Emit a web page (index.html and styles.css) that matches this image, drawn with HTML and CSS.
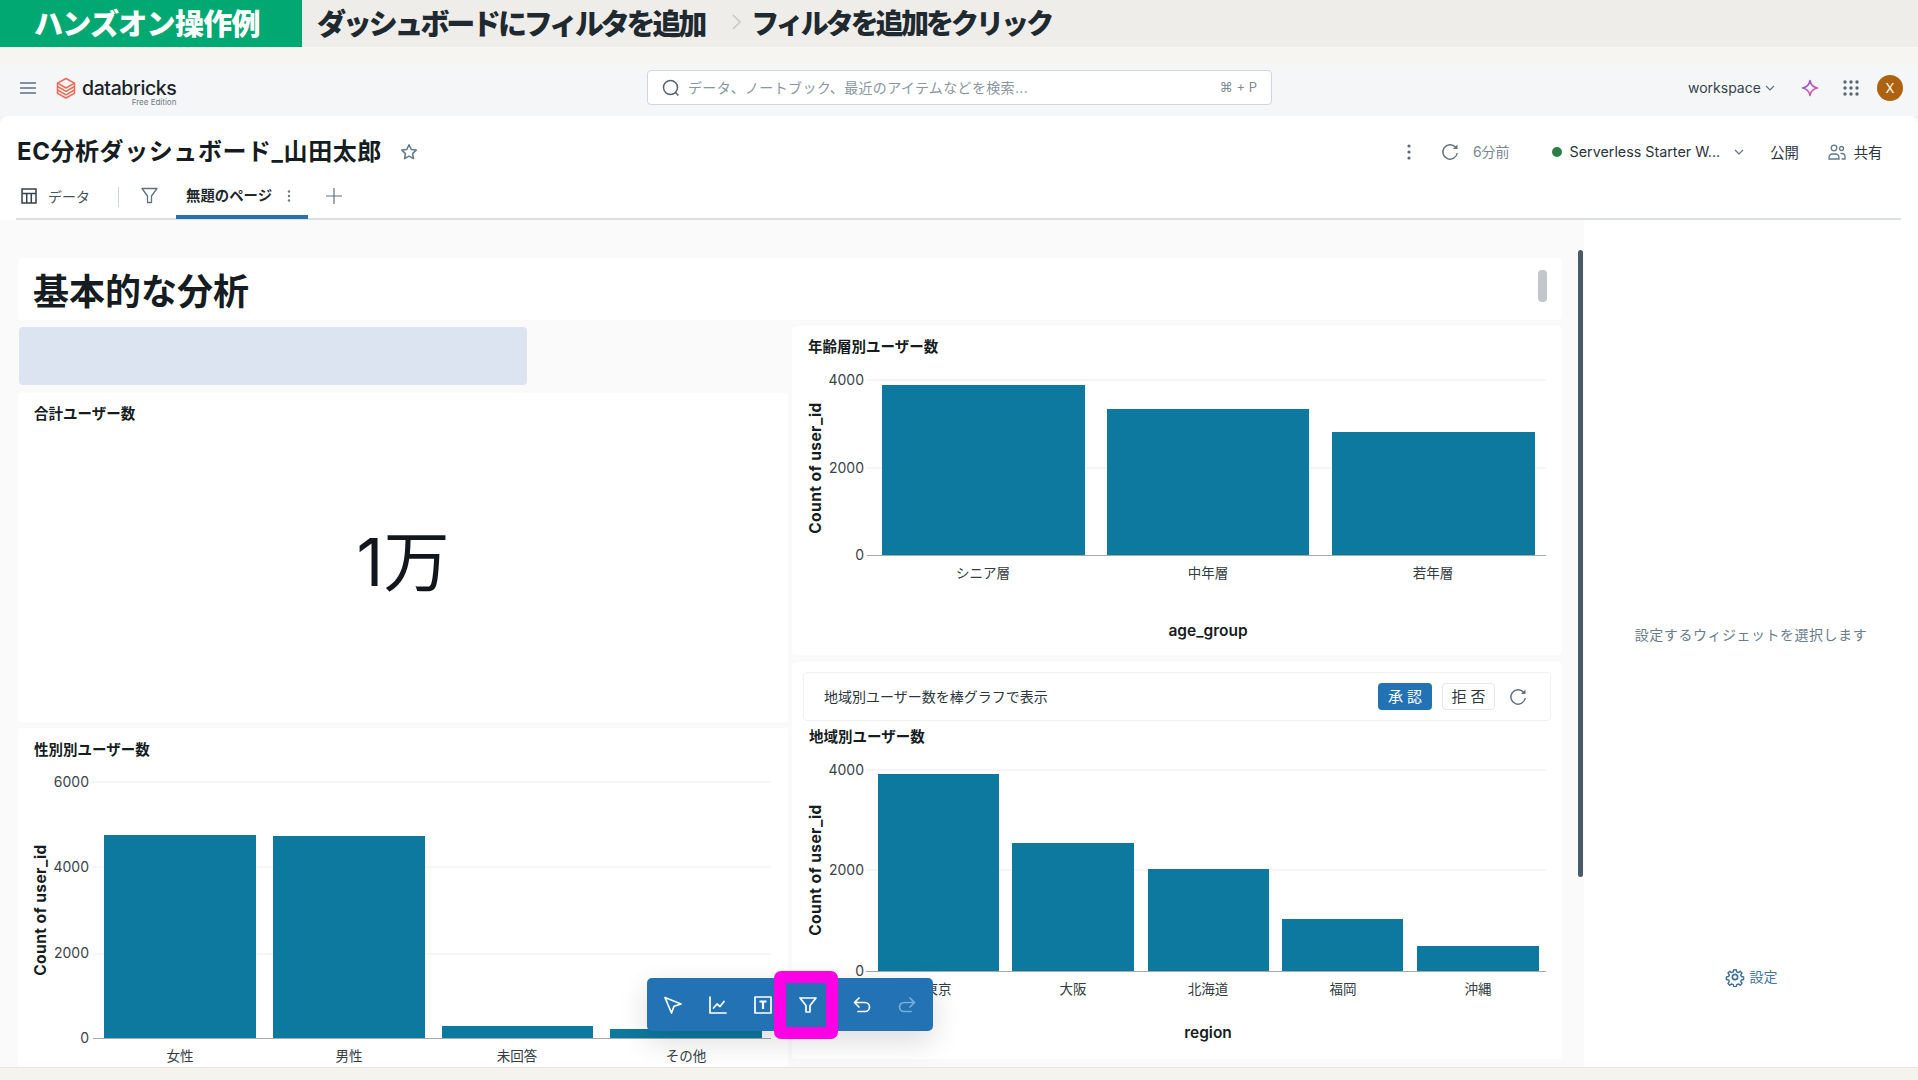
FILE: index.html
```html
<!DOCTYPE html>
<html lang="ja">
<head>
<meta charset="utf-8">
<title>EC分析ダッシュボード</title>
<link rel="stylesheet" href="styles.css">
</head>
<body>
<div class="page">
  <header class="banner">
    <div class="banner-tag">ハンズオン操作例</div>
    <div class="banner-step">ダッシュボードにフィルタを追加</div>
    <svg class="banner-sep" width="12" height="20" viewBox="0 0 12 20"><path d="M2 3l7 7-7 7" fill="none" stroke="#c9c9c4" stroke-width="1.6"/></svg>
    <div class="banner-action">フィルタを追加をクリック</div>
  </header>

  <nav class="topnav">
    <div class="nav-left">
      <svg class="hamburger" width="16" height="12" viewBox="0 0 16 12"><path d="M0 1h16M0 6h16M0 11h16" stroke="#5f7281" stroke-width="1.5"/></svg>
      <svg class="logo-mark" width="20" height="22" viewBox="0 0 20 22"><g fill="none" stroke="#ea6a55" stroke-width="1.5" stroke-linejoin="round"><path d="M10 1.5l8.5 4.7L10 11 1.500 6.200z"/><path d="M1.500 9.500L10 14.300l8.500-4.800"/><path d="M1.500 13L10 17.800 18.500 13"/><path d="M1.500 6.200v10.200L10 21l8.500-4.600V6.200"/></g></svg>
      <div class="logo-text">
        <span class="logo-name">databricks</span>
        <span class="logo-edition">Free Edition</span>
      </div>
    </div>
    <div class="search">
      <svg width="18" height="18" viewBox="0 0 18 18"><circle cx="8.500" cy="8.500" r="7" fill="none" stroke="#56636e" stroke-width="1.500"/><path d="M13 13l3.500 3.500" stroke="#56636e" stroke-width="1.500"/></svg>
      <span class="search-text">データ、ノートブック、最近のアイテムなどを検索...</span>
      <span class="search-key">⌘ + P</span>
    </div>
    <div class="nav-right">
      <span class="workspace">workspace</span>
      <svg class="chev-ws" width="10" height="6" viewBox="0 0 10 6"><path d="M1 1l4 4 4-4" fill="none" stroke="#5f7281" stroke-width="1.2"/></svg>
      <svg class="sparkle" width="18" height="18" viewBox="0 0 18 18"><defs><linearGradient id="spk" x1="0" y1="0" x2="1" y2="1"><stop offset="0" stop-color="#7b63e0"/><stop offset="1" stop-color="#f0528a"/></linearGradient></defs><path d="M9 1.500C9.800 6 12 8.200 16.500 9 12 9.800 9.800 12 9 16.500 8.200 12 6 9.800 1.500 9 6 8.200 8.200 6 9 1.500z" fill="none" stroke="url(#spk)" stroke-width="1.600" stroke-linejoin="round"/></svg>
      <svg class="apps" width="16" height="16" viewBox="0 0 16 16"><g fill="#5a6873"><circle cx="2" cy="2" r="1.700"/><circle cx="8" cy="2" r="1.700"/><circle cx="14" cy="2" r="1.700"/><circle cx="2" cy="8" r="1.700"/><circle cx="8" cy="8" r="1.700"/><circle cx="14" cy="8" r="1.700"/><circle cx="2" cy="14" r="1.700"/><circle cx="8" cy="14" r="1.700"/><circle cx="14" cy="14" r="1.700"/></g></svg>
      <span class="avatar">X</span>
    </div>
  </nav>

  <main class="main">
    <div class="title-row">
      <h1 class="dash-title">EC分析ダッシュボード_山田太郎</h1>
      <svg class="star" width="18" height="18" viewBox="0 0 18 18"><path d="M9 1.800l2.200 4.600 5 .7-3.600 3.500.9 5L9 13.200l-4.500 2.400.9-5L1.800 7.100l5-.7z" fill="none" stroke="#5f7a8d" stroke-width="1.500" stroke-linejoin="round"/></svg>
      <div class="title-actions">
        <svg class="act-kebab" width="4" height="16" viewBox="0 0 4 16"><g fill="#5a6873"><circle cx="2" cy="2" r="1.600"/><circle cx="2" cy="8" r="1.600"/><circle cx="2" cy="14" r="1.600"/></g></svg>
        <svg class="act-refresh" width="18" height="18" viewBox="0 0 18 18"><path d="M14.500 4.200A7.200 7.200 0 1 0 16.200 10" fill="none" stroke="#5f6f7b" stroke-width="1.400"/><path d="M16.500 1.500v4.500H12z" fill="#5f6f7b"/></svg>
        <span class="act-ago">6分前</span>
        <span class="act-dot"></span>
        <span class="act-wh">Serverless Starter W...</span>
        <svg class="act-chev" width="10" height="6" viewBox="0 0 10 6"><path d="M1 1l4 4 4-4" fill="none" stroke="#5f7281" stroke-width="1.200"/></svg>
        <span class="act-pub">公開</span>
        <svg class="act-share" width="18" height="16" viewBox="0 0 18 16"><g fill="none" stroke="#5f7a8d" stroke-width="1.300"><circle cx="6" cy="4" r="2.800"/><circle cx="13.500" cy="4.500" r="2"/><path d="M1 15v-1.500A3.500 3.500 0 0 1 4.500 10h3a3.500 3.500 0 0 1 3.500 3.500V15z"/><path d="M12.500 9.500h1.500a3 3 0 0 1 3 3V15h-3.500"/></g></svg>
        <span class="act-shr">共有</span>
      </div>
    </div>

    <div class="tabs">
      <svg class="tab-table" width="16" height="16" viewBox="0 0 16 16"><g fill="none" stroke="#36424b" stroke-width="1.500"><rect x="1" y="1" width="14" height="14"/><path d="M1 5.500h14M5.700 5.500V15M10.300 5.500V15"/></g></svg>
      <span class="tab-data">データ</span>
      <span class="tab-sep"></span>
      <svg class="tab-filter" width="17" height="17" viewBox="0 0 17 17"><path d="M1 1.500h15L10.500 9v6.500h-4V9z" fill="none" stroke="#5f7281" stroke-width="1.300" stroke-linejoin="round"/></svg>
      <div class="tab-active">
        <span class="tab-name">無題のページ</span>
        <svg width="4" height="12" viewBox="0 0 4 12"><g fill="#6a7a86"><circle cx="2" cy="1.500" r="1.200"/><circle cx="2" cy="6" r="1.200"/><circle cx="2" cy="10.500" r="1.200"/></g></svg>
      </div>
      <svg class="tab-plus" width="16" height="16" viewBox="0 0 16 16"><path d="M8 0v16M0 8h16" stroke="#5f7281" stroke-width="1.200"/></svg>
    </div>

    <div class="work">
      <section class="canvas">
        <div class="heading-card">
          <h2 class="heading">基本的な分析</h2>
          <span class="heading-thumb"></span>
        </div>
        <div class="grid">
          <div class="col col-left">
            <div class="filter-slot"></div>
            <article class="card card-counter">
              <h3 class="card-title">合計ユーザー数</h3>
              <div class="counter">1万</div>
            </article>
            <article class="card card-gender">
              <h3 class="card-title card-title-g">性別別ユーザー数</h3>
              <svg class="chart" width="770" height="308" viewBox="18 759 770 308">
                <path class="grid-line" d="M93 782H771M93 867H771M93 954H771"/>
                <text class="tick" x="89" y="782">6000</text>
                <text class="tick" x="89" y="867">4000</text>
                <text class="tick" x="89" y="953">2000</text>
                <text class="tick" x="89" y="1038">0</text>
                <g class="bars">
                  <rect x="104" y="835" width="152" height="203"/>
                  <rect x="273" y="836" width="152" height="202"/>
                  <rect x="442" y="1026" width="151" height="12"/>
                  <rect x="610" y="1029" width="152" height="9"/>
                </g>
                <path class="axis-line" d="M93 1038.500H771"/>
                <text class="cat" x="180" y="1056">女性</text>
                <text class="cat" x="349" y="1056">男性</text>
                <text class="cat" x="517" y="1056">未回答</text>
                <text class="cat" x="686" y="1056">その他</text>
                <text class="axis-y" transform="translate(40 910) rotate(-90)">Count of user_id</text>
              </svg>
            </article>
          </div>
          <div class="col col-right">
            <article class="card card-age">
              <h3 class="card-title">年齢層別ユーザー数</h3>
              <svg class="chart" width="770" height="299" viewBox="792 356 770 299">
                <path class="grid-line" d="M867 380H1546M867 468H1546"/>
                <text class="tick" x="864" y="380">4000</text>
                <text class="tick" x="864" y="468">2000</text>
                <text class="tick" x="864" y="555">0</text>
                <g class="bars">
                  <rect x="882" y="385" width="203" height="170"/>
                  <rect x="1107" y="409" width="202" height="146"/>
                  <rect x="1332" y="432" width="203" height="123"/>
                </g>
                <path class="axis-line" d="M867 555.500H1546"/>
                <text class="cat" x="983" y="573">シニア層</text>
                <text class="cat" x="1208" y="573">中年層</text>
                <text class="cat" x="1433" y="573">若年層</text>
                <text class="axis-x" x="1208" y="630">age_group</text>
                <text class="axis-y" transform="translate(815 468) rotate(-90)">Count of user_id</text>
              </svg>
            </article>
            <article class="card card-region">
              <div class="ai-bar">
                <span class="ai-text">地域別ユーザー数を棒グラフで表示</span>
                <span class="btn btn-primary">承 認</span>
                <span class="btn btn-plain">拒 否</span>
                <svg class="ai-refresh" width="18" height="18" viewBox="0 0 18 18"><path d="M14.500 4.200A7.200 7.200 0 1 0 16.200 10" fill="none" stroke="#5f6f7b" stroke-width="1.400"/><path d="M16.500 1.500v4.500H12z" fill="#5f6f7b"/></svg>
              </div>
              <h3 class="card-title card-title-r">地域別ユーザー数</h3>
              <svg class="chart" width="770" height="312" viewBox="792 747 770 312">
                <path class="grid-line" d="M866 770H1546M866 870H1546"/>
                <text class="tick" x="864" y="770">4000</text>
                <text class="tick" x="864" y="870">2000</text>
                <text class="tick" x="864" y="971">0</text>
                <g class="bars">
                  <rect x="878" y="774" width="121" height="197"/>
                  <rect x="1012" y="843" width="122" height="128"/>
                  <rect x="1148" y="869" width="121" height="102"/>
                  <rect x="1282" y="919" width="121" height="52"/>
                  <rect x="1417" y="946" width="122" height="25"/>
                </g>
                <path class="axis-line" d="M866 971.500H1546"/>
                <text class="cat" x="938" y="989">東京</text>
                <text class="cat" x="1073" y="989">大阪</text>
                <text class="cat" x="1208" y="989">北海道</text>
                <text class="cat" x="1343" y="989">福岡</text>
                <text class="cat" x="1478" y="989">沖縄</text>
                <text class="axis-x" x="1208" y="1032">region</text>
                <text class="axis-y" transform="translate(815 870) rotate(-90)">Count of user_id</text>
              </svg>
            </article>
          </div>
        </div>
        <span class="canvas-scroll"></span>
      </section>

      <aside class="panel">
        <p class="panel-hint">設定するウィジェットを選択します</p>
        <div class="panel-settings">
          <svg width="20" height="20" viewBox="0 0 24 24"><g fill="none" stroke="#3f7199" stroke-width="2" stroke-linejoin="round"><circle cx="12" cy="12" r="3.200"/><path d="M10.300 2h3.400l.6 3 2.200.9 2.600-1.700 2.400 2.400-1.700 2.600.9 2.200 3 .6v3.400l-3 .6-.9 2.200 1.700 2.600-2.400 2.400-2.600-1.700-2.200.9-.6 3h-3.400l-.6-3-2.200-.9-2.600 1.700-2.400-2.400 1.700-2.600-.9-2.200-3-.6v-3.400l3-.6.9-2.200-1.700-2.600 2.400-2.400 2.600 1.700 2.200-.9z" transform="translate(12 12) scale(.88) translate(-12 -12)"/></g></svg>
          <span>設定</span>
        </div>
      </aside>
    </div>
  </main>

  <div class="foot"></div>

  <div class="toolbar">
    <svg class="tool" viewBox="0 0 20 20"><path d="M2 2.500l16 6.500-7 2.300L8.500 18z" class="tool-stroke"/></svg>
    <svg class="tool" viewBox="0 0 20 20"><path d="M2 2v16h16" class="tool-stroke"/><path d="M5.500 13l3.500-4 3 2.500 4-5" class="tool-stroke"/></svg>
    <svg class="tool" viewBox="0 0 20 20"><rect x="2" y="2" width="16" height="16" class="tool-stroke"/><path d="M6.500 6.500h7M10 6.500v7.500" class="tool-stroke tool-bold"/></svg>
    <span class="tool-hi"><svg class="tool" viewBox="0 0 20 20"><path d="M2 3h16l-6 7.500V17H8v-6.500z" class="tool-stroke"/></svg></span>
    <svg class="tool tool-undo" viewBox="0 0 20 20"><path d="M7 3L2.500 7.500 7 12M2.500 7.500H13a4.500 4.500 0 0 1 0 9H6" class="tool-stroke"/></svg>
    <svg class="tool" viewBox="0 0 20 20"><path d="M13 3l4.500 4.500L13 12M17.500 7.500H7a4.500 4.500 0 0 0 0 9h7" class="tool-stroke tool-dim"/></svg>
  </div>
</div>
</body>
</html>
```
FILE: styles.css
```css
* { box-sizing: border-box; }
html, body { margin: 0; height: 100%; }
body {
  font-family: Inter, "Noto Sans CJK JP", "Noto Sans", sans-serif;
  color: #1f272d;
  background: #f4f3ee;
  overflow: hidden;
}
h1, h2, h3, p { margin: 0; }

.page {
  position: relative;
  width: 1918px;
  height: 1080px;
  display: flex;
  flex-direction: column;
  overflow: hidden;
}

/* Banner */
.banner {
  height: 47px;
  flex: none;
  display: flex;
  align-items: center;
  padding-bottom: 4px;
  background: #efede9;
  font-family: "Noto Sans CJK JP", sans-serif;
  font-weight: 900;
  color: #1f2a30;
}
.banner-tag {
  width: 302px;
  height: 47px;
  margin-bottom: -4px;
  padding: 0 0 4px 34px;
  display: flex;
  align-items: center;
  background: #02a871;
  color: #fff;
  font-size: 29px;
  letter-spacing: -.7px;
}
.banner-step {
  margin-left: 15px;
  font-size: 29px;
  letter-spacing: -3.150px;
}
.banner-sep { margin-left: 27px; }
.banner-action {
  margin-left: 8px;
  font-size: 28px;
  letter-spacing: -2.950px;
}

/* Top nav */
.topnav {
  height: 69px;
  flex: none;
  padding: 23px 0 10px;
  display: flex;
  align-items: flex-start;
  background: linear-gradient(#f7f5f2 0 14px, #f4f6f8 24px);
}
.nav-left {
  width: 647px;
  height: 36px;
  display: flex;
  align-items: center;
  padding-left: 20px;
}
.logo-mark { margin-left: 20px; }
.logo-text {
  margin: 9px 0 0 6px;
  display: flex;
  flex-direction: column;
  align-items: flex-end;
  line-height: 1;
}
.logo-name {
  font-size: 19.500px;
  font-weight: 500;
  letter-spacing: -.4px;
  color: #1b2328;
}
.logo-edition {
  font-size: 8px;
  color: #6f7b84;
  margin-top: 0;
}
.search {
  width: 625px;
  height: 35px;
  display: flex;
  align-items: center;
  padding: 0 14px 0 14px;
  background: #fff;
  border: 1px solid #ced6dd;
  border-radius: 4px;
}
.search-text {
  margin: 0 0 2px 8px;
  font-size: 14px;
  letter-spacing: .35px;
  color: #8a969f;
}
.search-key {
  margin: 0 0 2px auto;
  font-size: 13px;
  color: #7f8b95;
}
.nav-right {
  flex: 1;
  height: 36px;
  display: flex;
  align-items: center;
  padding-left: 416px;
}
.workspace { font-size: 14px; color: #37434c; padding-bottom: 2px; }
.chev-ws { margin-left: 4px; }
.sparkle { margin-left: 26px; }
.apps { margin-left: 24px; }
.avatar {
  width: 26px;
  height: 26px;
  margin-left: 18px;
  border-radius: 50%;
  background: #ad620f;
  color: #fff;
  font-size: 13px;
  display: flex;
  align-items: center;
  justify-content: center;
}

/* Main */
.main {
  height: 951px;
  flex: none;
  display: flex;
  flex-direction: column;
  background: #fff;
  border-radius: 8px 8px 0 0;
}
.title-row {
  height: 52px;
  flex: none;
  padding: 20px 0 0 17px;
  display: flex;
  align-items: flex-start;
}
.dash-title {
  font-size: 24px;
  line-height: 32px;
  font-weight: 700;
  letter-spacing: .57px;
  color: #161d22;
}
.star { margin: 7px 0 0 18px; }
.title-actions {
  flex: 1;
  height: 32px;
  display: flex;
  align-items: center;
  font-size: 14.300px;
  padding-left: 989px;
  color: #2a343b;
}
.title-actions span { margin-bottom: 2px; }
.act-refresh { margin-left: 30px; }
.title-actions .act-ago { margin-left: 14px; color: #7a8791; font-size: 14px; }
.title-actions .act-dot {
  width: 10px;
  height: 10px;
  margin: 0 0 0 42px;
  border-radius: 50%;
  background: #2b8043;
}
.act-wh { margin-left: 8px; white-space: nowrap; }
.act-chev { margin-left: 14px; }
.act-pub { margin-left: 26px; }
.act-share { margin-left: 29px; }
.act-shr { margin-left: 8px; }

.tabs {
  height: 52px;
  flex: none;
  margin: 0 17px 0 16px;
  padding: 7px 0 0 5px;
  display: flex;
  align-items: center;
  border-bottom: 2px solid #d8e0e5;
  font-size: 14px;
}
.tab-table { margin-top: -2px; }
.tab-data { margin: 0 0 2px 11px; color: #48545d; }
.tab-sep {
  width: 1px;
  height: 20px;
  margin-left: 28px;
  background: #cdd5da;
}
.tab-filter { margin: -2px 0 0 22px; }
.tab-active {
  width: 132px;
  height: 43px;
  margin: 0 0 -2px 18px;
  padding-left: 10px;
  display: flex;
  align-items: center;
  gap: 15px;
  border-bottom: 4px solid #2272b4;
  font-weight: 500;
}
.tab-name { font-size: 14.400px; color: #1f272d; font-weight: 700; margin-bottom: 2px; }
.tab-plus { margin: -2px 0 0 18px; }

.work {
  flex: 1;
  min-height: 0;
  display: flex;
}
.canvas {
  position: relative;
  width: 1584px;
  padding: 38px 22px 0 18px;
  background: #fafafa;
  overflow: hidden;
}
.canvas-scroll {
  position: absolute;
  left: 1578px;
  top: 30px;
  width: 5px;
  height: 627px;
  border-radius: 3px;
  background: #4b5a67;
}
.heading-card {
  position: relative;
  height: 62px;
  padding-left: 15px;
  display: flex;
  align-items: center;
  background: #fff;
  border-radius: 4px;
}
.heading {
  font-size: 36px;
  line-height: 1;
  font-weight: 700;
  color: #161d22;
  padding-top: 6px;
}
.heading-thumb {
  position: absolute;
  right: 15px;
  top: 12px;
  width: 9px;
  height: 32px;
  border-radius: 4px;
  background: #c3c7cb;
}
.grid {
  margin-top: 6px;
  display: grid;
  grid-template-columns: 770px 770px;
  column-gap: 4px;
}
.col { display: flex; flex-direction: column; }
.col-left { padding-top: 1px; gap: 8px; }
.col-right { gap: 7px; }
.filter-slot {
  width: 508px;
  height: 58px;
  margin-left: 1px;
  border-radius: 4px;
  background: #dde4f1;
}
.card { background: #fff; border-radius: 4px; }
.card-title {
  padding: 12px 0 0 16px;
  font-size: 14.500px;
  line-height: 18px;
  font-weight: 700;
  color: #161d22;
}
.card-counter { height: 329px; display: flex; flex-direction: column; }
.counter {
  flex: 1;
  padding-bottom: 32px;
  display: flex;
  align-items: center;
  justify-content: center;
  font-size: 66px;
  font-weight: 400;
  color: #11171c;
}
.card-gender { height: 339px; margin-top: -2px; }
.card-title-g { padding-top: 13px; }
.card-age { height: 329px; }
.card-region { height: 397px; padding-top: 10px; }
.card-title-r { padding: 7px 0 1px 17px; }
.chart { display: block; }

.grid-line { stroke: #e9edf0; stroke-width: 1; fill: none; }
.axis-line { stroke: #a3a9ad; stroke-width: 1; fill: none; }
.bars rect { fill: #0d799e; }
.tick {
  font-size: 14px;
  fill: #3a4349;
  text-anchor: end;
  dominant-baseline: central;
  transform: translateY(-1px);
}
.cat {
  font-size: 13.500px;
  fill: #333c42;
  text-anchor: middle;
  dominant-baseline: central;
}
.axis-x {
  font-size: 15.500px;
  font-weight: 600;
  fill: #161d22;
  text-anchor: middle;
  dominant-baseline: central;
}
.axis-y {
  font-size: 15.500px;
  font-weight: 700;
  letter-spacing: .45px;
  fill: #161d22;
  text-anchor: middle;
  dominant-baseline: central;
}

.ai-bar {
  width: 748px;
  height: 49px;
  margin-left: 11px;
  padding: 0 23px 0 20px;
  display: flex;
  align-items: center;
  background: #fff;
  border: 1px solid #eef0f2;
  border-radius: 4px;
}
.ai-text { font-size: 14px; color: #2c363d; margin: 0 auto 2px 0; }
.btn {
  height: 27px;
  padding-bottom: 2px;
  display: flex;
  align-items: center;
  justify-content: center;
  font-size: 15px;
  border-radius: 4px;
}
.btn-primary { width: 54px; background: #2272b4; color: #fff; }
.btn-plain { width: 53px; margin-left: 10px; border: 1px solid #e4e8eb; color: #2c363d; }
.ai-refresh { margin-left: 14px; }

/* Right panel */
.panel {
  flex: 1;
  position: relative;
  display: flex;
  flex-direction: column;
  align-items: center;
  padding-top: 405px;
  background: #fff;
}
.panel-hint {
  font-size: 14px;
  line-height: 20px;
  letter-spacing: .52px;
  color: #6b7c8b;
}
.panel-settings {
  margin-top: 322px;
  display: flex;
  align-items: center;
  gap: 5px;
  font-size: 14px;
  line-height: 20px;
  color: #45769f;
}

.foot {
  flex: 1;
  background: #f4f3ee;
  border-top: 1px solid #e6e7e4;
}

/* Floating toolbar */
.toolbar {
  position: absolute;
  left: 647px;
  top: 978px;
  width: 286px;
  height: 53px;
  display: flex;
  align-items: center;
  padding-left: 16px;
  background: #2272b4;
  border-radius: 5px;
  box-shadow: 0 10px 30px rgba(0, 0, 0, .14);
}
.tool {
  width: 20px;
  height: 20px;
  flex: none;
  margin-right: 25px;
  display: block;
}
.tool-stroke {
  fill: none;
  stroke: #fff;
  stroke-width: 1.700;
  stroke-linecap: round;
  stroke-linejoin: round;
}
.tool-bold { stroke-width: 2.200; stroke-linecap: butt; }
.tool-dim { stroke: #79aedb; }
.tool-hi {
  position: relative;
  flex: none;
  width: 64px;
  height: 68px;
  margin: 0 14px 0 -24px;
  padding-left: 4px;
  display: flex;
  align-items: center;
  justify-content: center;
  background: #2272b4;
  border: 12px solid #ff00e6;
  border-radius: 7px;
}
.tool-hi .tool { margin-right: 0; }
```
